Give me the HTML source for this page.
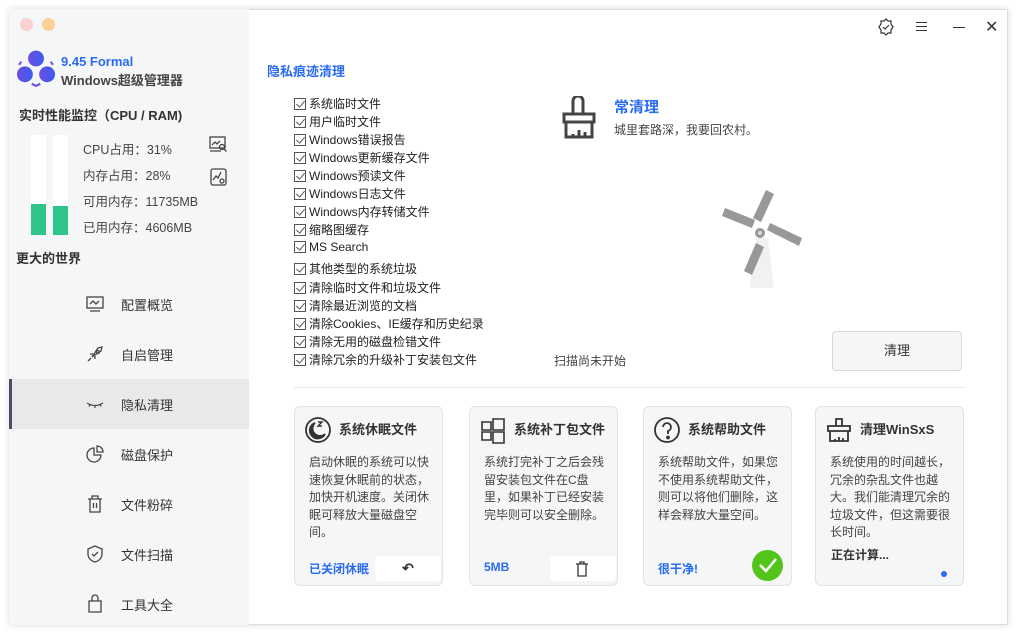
<!DOCTYPE html>
<html><head><meta charset="utf-8"><style>
*{margin:0;padding:0;box-sizing:border-box}
body{width:1018px;height:634px;background:#fff;font-family:"Liberation Sans","Noto Sans CJK SC",sans-serif;color:#333;position:relative;overflow:hidden;font-size:12px}
.a{position:absolute}
.win{left:9px;top:9px;width:999px;height:616px;border:1px solid #ddd;box-shadow:0 0 6px rgba(0,0,0,.15);background:#fff}
.side{left:9px;top:9px;width:240px;height:616px;background:#f5f6f8}
.dot{width:13px;height:13px;border-radius:50%;top:18px}
.nav{left:9px;width:240px;height:50px}
.nav .t{left:112px;top:16px;font-size:13px;color:#333}
.nav svg{position:absolute;left:76px;top:15px}
.cb{left:294px;font-size:12px;color:#222;white-space:nowrap}
.cb i{display:inline-block;width:12px;height:12px;border:1px solid #555;vertical-align:-2px;margin-right:3px;position:relative}
.cb i:after{content:"";position:absolute;left:3px;top:0px;width:4px;height:7px;border-right:1.3px solid #555;border-bottom:1.3px solid #555;transform:rotate(40deg)}
.card{top:406px;height:180px;width:149px;background:#f5f6f8;border:1px solid #e2e3e5;border-radius:6px}
.card .h{position:absolute;left:44px;top:12px;font-size:13px;font-weight:bold;color:#333}
.card .d{position:absolute;left:14px;top:47px;width:128px;font-size:12px;line-height:17.5px;color:#444}
.card svg{position:absolute;left:9px;top:9px}
.card .f{position:absolute;left:14px;top:153px;font-size:12px;font-weight:bold;color:#2a6cf0}
.card .b{position:absolute;left:80px;top:149px;width:66px;height:25px;background:#fff;border-radius:4px}
</style></head><body>
<div class="a win"></div>
<div class="a side"></div>
<div class="a dot" style="left:20px;background:#fdd0d0"></div>
<div class="a dot" style="left:42px;background:#fdd09a"></div>
<svg class="a" style="left:17px;top:49px" width="38" height="38" viewBox="0 0 36 36"><defs><linearGradient id="g" x1="0" x2="1"><stop offset="0" stop-color="#6b4fe0"/><stop offset="1" stop-color="#3a5cf0"/></linearGradient></defs><circle cx="18" cy="9" r="7.5" fill="url(#g)"/><circle cx="7.5" cy="24" r="7.5" fill="url(#g)"/><circle cx="28.5" cy="24" r="7.5" fill="url(#g)"/><path d="M4 12 L2 15 M32 12 L34 15 M14 33 L18 35 L22 33" stroke="#6b4fe0" stroke-width="2" fill="none"/></svg>
<div class="a" style="left:61px;top:54px;font-size:13px;font-weight:bold;color:#2a6cf0">9.45 Formal</div>
<div class="a" style="left:61px;top:70px;font-size:13px;font-weight:bold;color:#444">Windows超级管理器</div>
<div class="a" style="left:19px;top:105px;font-size:13px;font-weight:bold;color:#333">实时性能监控（CPU / RAM)</div>
<div class="a" style="left:31px;top:135px;width:15px;height:100px;background:#fff"><div class="a" style="left:0;bottom:0;width:15px;height:31px;background:#2ec48a"></div></div>
<div class="a" style="left:53px;top:135px;width:15px;height:100px;background:#fff"><div class="a" style="left:0;bottom:0;width:15px;height:29px;background:#2ec48a"></div></div>
<div class="a" style="left:83px;top:137px;font-size:12.5px;color:#444;line-height:26px">CPU占用：31%<br>内存占用：28%<br>可用内存：11735MB<br>已用内存：4606MB</div>
<svg class="a" style="left:209px;top:136px" width="19" height="17" viewBox="0 0 19 17" fill="none" stroke="#444" stroke-width="1.3"><rect x="1" y="1" width="15" height="11"/><path d="M1 15h11M3 9l3-3 2 2 3-3"/><circle cx="13" cy="11" r="2.5"/><path d="M15 13l2.5 2.5"/></svg>
<svg class="a" style="left:210px;top:168px" width="17" height="18" viewBox="0 0 17 18" fill="none" stroke="#444" stroke-width="1.3"><rect x="1" y="1" width="15" height="16" rx="2"/><path d="M3 12l3-4 2 2 3-6"/><circle cx="12" cy="13" r="2"/></svg>
<div class="a" style="left:16px;top:248px;font-size:13px;font-weight:bold;color:#333">更大的世界</div>

<div class="a nav" style="top:279px"><svg width="20" height="20" viewBox="0 0 20 20" fill="none" stroke="#444" stroke-width="1.3"><rect x="2" y="3" width="16" height="11"/><path d="M5 17h10M5 10l3-3 3 3 3-3"/></svg><div class="a t">配置概览</div></div>
<div class="a nav" style="top:329px"><svg width="20" height="20" viewBox="0 0 20 20" fill="none" stroke="#444" stroke-width="1.3"><path d="M7 13l6-9 4-1-1 4-9 6zM5 10l3 0M10 15v-3M3 17l3-3"/><circle cx="13" cy="8" r="1.5"/></svg><div class="a t">自启管理</div></div>
<div class="a nav" style="top:379px;background:#e9e9eb"><div class="a" style="left:0;top:0;width:3px;height:50px;background:#4a5068"></div><svg width="20" height="20" viewBox="0 0 20 20" fill="none" stroke="#444" stroke-width="1.2"><path d="M2 9q8 5 16 0M5 10.5l-1 2M10 12v2M15 10.5l1 2"/></svg><div class="a t">隐私清理</div></div>
<div class="a nav" style="top:429px"><svg width="20" height="20" viewBox="0 0 20 20" fill="none" stroke="#444" stroke-width="1.3"><path d="M9 4a7 7 0 1 0 7 7H9zM12 2a6 6 0 0 1 6 6h-6z"/></svg><div class="a t">磁盘保护</div></div>
<div class="a nav" style="top:479px"><svg width="20" height="20" viewBox="0 0 20 20" fill="none" stroke="#444" stroke-width="1.3"><path d="M3 5h14M7 5V2h6v3M5 5v13h10V5M8.5 9v5M11.5 9v5"/></svg><div class="a t">文件粉碎</div></div>
<div class="a nav" style="top:529px"><svg width="20" height="20" viewBox="0 0 20 20" fill="none" stroke="#444" stroke-width="1.3"><path d="M10 2l7 3v5c0 4-3 7-7 8-4-1-7-4-7-8V5z M7 10l2 2 4-4"/></svg><div class="a t">文件扫描</div></div>
<div class="a nav" style="top:579px"><svg width="20" height="20" viewBox="0 0 20 20" fill="none" stroke="#444" stroke-width="1.3"><path d="M4 7h12v11H4zM7 7V4a3 3 0 0 1 6 0v3"/></svg><div class="a t">工具大全</div></div>

<svg class="a" style="left:877px;top:18px" width="18" height="18" viewBox="0 0 18 18" fill="none" stroke="#333" stroke-width="1.2"><path d="M9 1l2 2h3v3l2 3-2 3v3h-3l-2 2-2-2H4v-3L2 9l2-3V3h3z M6 9l2 2 4-4"/></svg>
<div class="a" style="left:916px;top:22px;width:11px;height:9px;border-top:1.4px solid #333;border-bottom:1.4px solid #333"><div class="a" style="left:0;top:2.5px;width:11px;height:1.4px;background:#333"></div></div>
<div class="a" style="left:953px;top:27px;width:12px;height:1.4px;background:#333"></div>
<div class="a" style="left:985px;top:20px;font-size:16px;color:#333;line-height:16px">✕</div>

<div class="a" style="left:267px;top:61px;font-size:13px;font-weight:bold;color:#2a6cf0">隐私痕迹清理</div>
<div class="a cb" style="top:95px"><i></i>系统临时文件</div>
<div class="a cb" style="top:113px"><i></i>用户临时文件</div>
<div class="a cb" style="top:131px"><i></i>Windows错误报告</div>
<div class="a cb" style="top:149px"><i></i>Windows更新缓存文件</div>
<div class="a cb" style="top:167px"><i></i>Windows预读文件</div>
<div class="a cb" style="top:185px"><i></i>Windows日志文件</div>
<div class="a cb" style="top:203px"><i></i>Windows内存转储文件</div>
<div class="a cb" style="top:221px"><i></i>缩略图缓存</div>
<div class="a cb" style="top:240px"><i></i>MS Search</div>
<div class="a cb" style="top:260px"><i></i>其他类型的系统垃圾</div>
<div class="a cb" style="top:279px"><i></i>清除临时文件和垃圾文件</div>
<div class="a cb" style="top:297px"><i></i>清除最近浏览的文档</div>
<div class="a cb" style="top:315px"><i></i>清除Cookies、IE缓存和历史纪录</div>
<div class="a cb" style="top:333px"><i></i>清除无用的磁盘检错文件</div>
<div class="a cb" style="top:351px"><i></i>清除冗余的升级补丁安装包文件</div>

<svg class="a" style="left:558px;top:96px" width="42" height="46" viewBox="0 0 42 46" fill="none" stroke="#444" stroke-width="3"><path d="M15 18V5a5 5 0 0 1 10 0v13H6v8h30v-8zM8 26v15h26V26M21 41v-7M27 41v-5M15 41v-3"/></svg>
<div class="a" style="left:614px;top:96px;font-size:15px;font-weight:bold;color:#2a6cf0">常清理</div>
<div class="a" style="left:614px;top:121px;font-size:12px;color:#444">城里套路深，我要回农村。</div>
<svg class="a" style="left:718px;top:188px" width="85" height="100" viewBox="0 0 85 100"><path d="M38 50l-6 50h24l-6-50z" fill="#f1f1f1"/><g fill="#979996"><path d="M48 2l8 4-13 28-8-4z"/><path d="M4 28l3-8 30 12-3 8z"/><path d="M49 42l3-7 32 15-3 8z"/><path d="M38 55l8 4-12 28-8-4z"/></g><circle cx="42" cy="45" r="5" fill="#979996"/><circle cx="42" cy="45" r="2" fill="#ddd"/></svg>
<div class="a" style="left:554px;top:352px;font-size:12px;color:#444">扫描尚未开始</div>
<div class="a" style="left:832px;top:331px;width:130px;height:40px;background:#f5f6f8;border:1px solid #d8d9dc;border-radius:4px;text-align:center;line-height:38px;font-size:13px;color:#333">清理</div>
<div class="a" style="left:294px;top:387px;width:670px;height:1px;background:#e8e8e8"></div>

<div class="a card" style="left:294px"><svg width="28" height="28" viewBox="0 0 28 28" fill="none" stroke="#333" stroke-width="1.8"><circle cx="14" cy="14" r="12"/><path d="M11 7a8 8 0 1 0 10 11 7 7 0 0 1-10-11z" fill="#333"/><path d="M14 6h4l-4 4h4" stroke-width="1.4"/></svg><div class="h">系统休眠文件</div><div class="d">启动休眠的系统可以快速恢复休眠前的状态，加快开机速度。关闭休眠可释放大量磁盘空间。</div><div class="f">已关闭休眠</div><div class="b" style="text-align:center;line-height:25px;font-size:14px;font-weight:bold;color:#333">↶</div></div>
<div class="a card" style="left:469px"><svg width="28" height="28" viewBox="0 0 28 28" fill="none" stroke="#333" stroke-width="1.6"><path d="M3 6h9v8H3zM14 3h11v11H14zM3 16h9v8H3zM14 16h11v11H14z"/></svg><div class="h">系统补丁包文件</div><div class="d">系统打完补丁之后会残留安装包文件在C盘里，如果补丁已经安装完毕则可以安全删除。</div><div class="f">5MB</div><div class="b"><svg style="left:25px;top:5px" width="14" height="16" viewBox="0 0 14 16" fill="none" stroke="#333" stroke-width="1.3"><path d="M1 3h12M5 3V1h4v2M3 3v12h8V3"/></svg></div></div>
<div class="a card" style="left:643px"><svg width="28" height="28" viewBox="0 0 28 28" fill="none" stroke="#333" stroke-width="1.8"><circle cx="14" cy="14" r="12"/><path d="M10 11a4 4 0 1 1 5 4v3"/><circle cx="15" cy="21.5" r="1" fill="#333"/></svg><div class="h">系统帮助文件</div><div class="d">系统帮助文件，如果您不使用系统帮助文件，则可以将他们删除，这样会释放大量空间。</div><div class="f">很干净!</div><div class="a" style="left:108px;top:143px;width:31px;height:31px;border-radius:50%;background:#52c41a"><svg style="left:6px;top:7px" width="20" height="16" viewBox="0 0 20 16" fill="none" stroke="#fff" stroke-width="2.5"><path d="M2 8l6 6L18 2"/></svg></div></div>
<div class="a card" style="left:815px"><svg width="28" height="28" viewBox="0 0 28 28" fill="none" stroke="#333" stroke-width="1.8"><path d="M11 10V3h6v7H3v5h22v-5zM5 15v10h18V15M14 25v-4M18 25v-3M10 25v-2"/></svg><div class="h">清理WinSxS</div><div class="d">系统使用的时间越长，冗余的杂乱文件也越大。我们能清理冗余的垃圾文件，但这需要很长时间。</div><div class="a" style="left:15px;top:139px;font-size:12px;font-weight:bold;color:#333">正在计算...</div><div class="a" style="left:125px;top:164px;width:6px;height:6px;border-radius:50%;background:#2a6cf0"></div></div>
</body></html>
